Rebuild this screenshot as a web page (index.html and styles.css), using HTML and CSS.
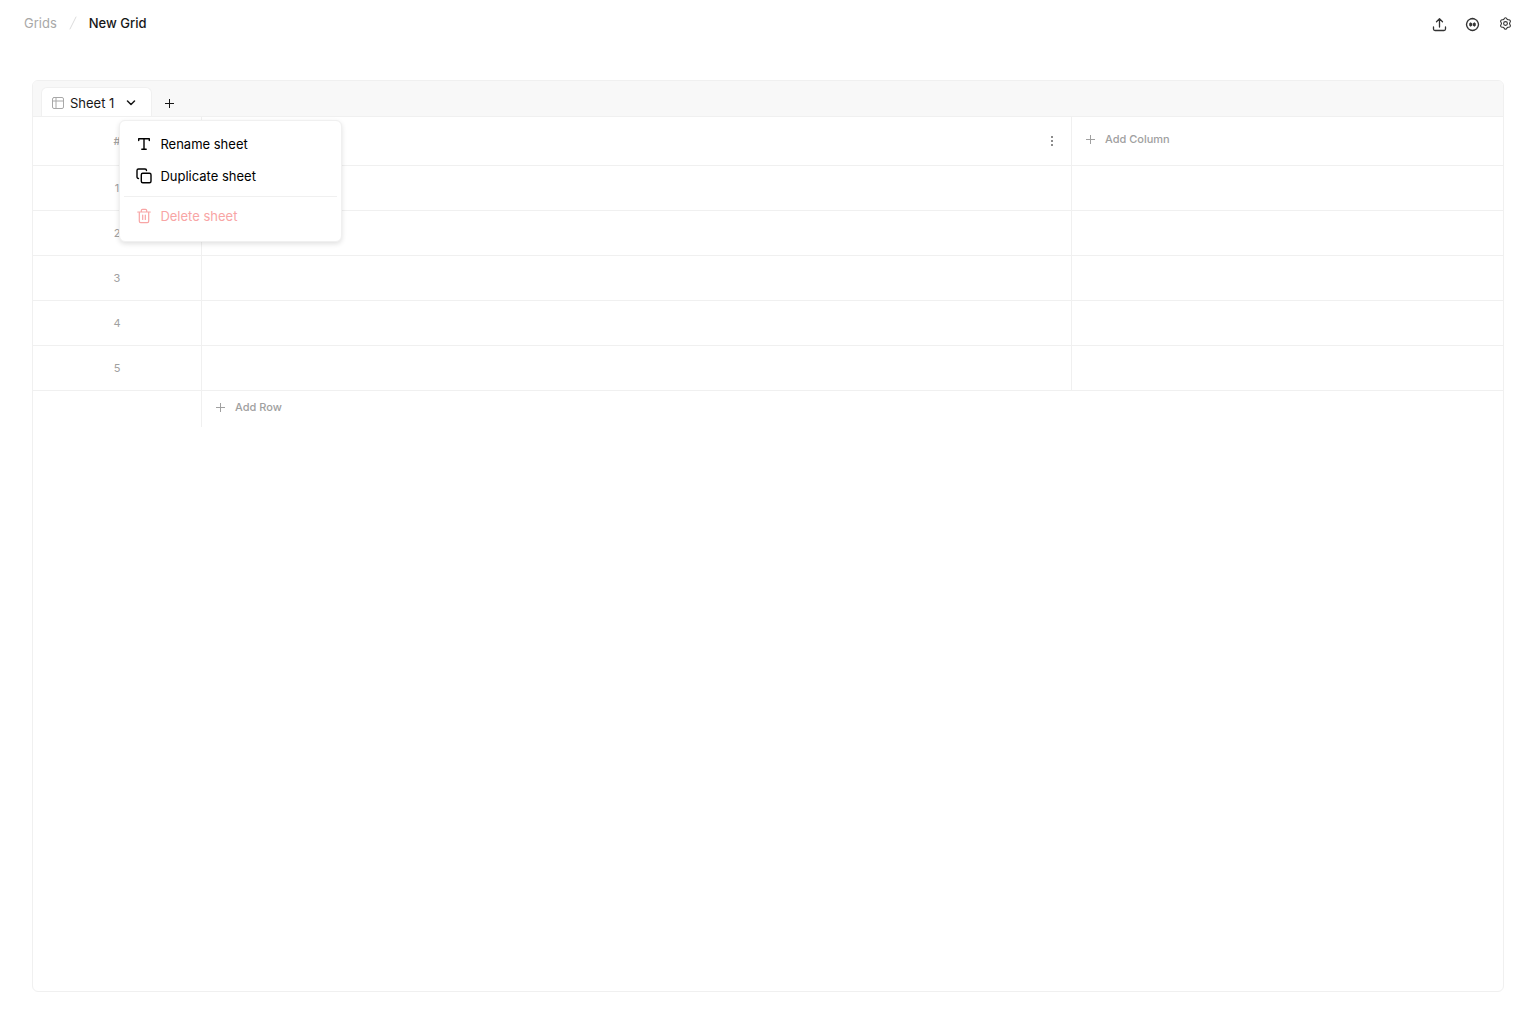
FILE: index.html
```html
<!DOCTYPE html>
<html lang="en">
<head>
  <meta charset="UTF-8">
  <meta name="viewport" content="width=device-width, initial-scale=1">
  <title>New Grid</title>
  <link rel="stylesheet" href="styles.css">
</head>
<body>

<header class="topbar">
  <nav class="breadcrumb" aria-label="Breadcrumb">
    <a href="#">Grids</a>
    <svg class="slash" width="8" height="14" viewBox="0 0 8 14"><path d="M7 1 1 13"/></svg>
    <span class="current">New Grid</span>
  </nav>
  <div class="actions">
    <button class="icon-btn" aria-label="Share">
      <svg width="15" height="15" viewBox="0 0 15 15"><path d="M7.500 10V2M4.500 4.800l3-3 3 3M1.500 10v2a1.500 1.500 0 0 0 1.500 1.500h9a1.500 1.500 0 0 0 1.500-1.500v-2"/></svg>
    </button>
    <button class="icon-btn" aria-label="Assistant">
      <svg width="15" height="15" viewBox="0 0 15 15"><path d="M7.500 1.500 9.600 2 11.600 3.200 13 5.300 13.500 7.500 13 9.700 11.700 11.700 9.700 13 7.500 13.500 5.300 13 3.300 11.700 2 9.700 1.500 7.500 2 5.300 3.300 3.200 5.300 2Z"/><path class="fill" d="M5.500 5.200 7.200 6.500V8.500L5.500 9.800 4.200 8.500V6.500ZM9.500 5.200 10.800 6.500V8.500L9.500 9.800 7.800 8.500V6.500Z"/></svg>
    </button>
    <button class="icon-btn" aria-label="Settings">
      <svg class="gear" width="13" height="13" viewBox="0 0 24 24"><path d="M12 1.500c1.500 0 2.200.8 2.700 2.200.4 1.100 1.300 1.600 2.500 1.400 1.600-.3 2.700 0 3.500 1.300.8 1.400.5 2.400-.5 3.600-.8 1-.8 3 0 4 1 1.200 1.300 2.200.5 3.600-.8 1.300-1.900 1.600-3.500 1.300-1.200-.2-2.100.3-2.500 1.400-.5 1.400-1.200 2.200-2.700 2.200s-2.200-.8-2.700-2.200c-.4-1.100-1.300-1.600-2.500-1.400-1.600.3-2.700 0-3.500-1.300-.8-1.400-.5-2.400.5-3.600.8-1 .8-3 0-4-1-1.200-1.300-2.200-.5-3.600.8-1.300 1.900-1.600 3.500-1.300 1.200.2 2.100-.3 2.500-1.400.5-1.400 1.200-2.200 2.700-2.200Z"/><circle cx="12" cy="12" r="3.500"/></svg>
    </button>
  </div>
</header>

<main class="panel">
  <div class="tabs">
    <div class="tab">
      <svg class="tab-icon" width="12" height="12" viewBox="0 0 12 12"><rect x=".5" y=".5" width="11" height="11" rx="1.500"/><path d="M.5 4h11M4 .5v11"/></svg>
      <button class="tab-name">Sheet 1</button>
      <div class="dropdown">
        <button class="tab-toggle" aria-label="Sheet options" aria-expanded="true">
          <svg width="10" height="6" viewBox="0 0 10 6"><path d="m1.500 1 3.500 3.500L8.500 1"/></svg>
        </button>
        <div class="menu">
          <button class="menu-item">
            <svg width="16" height="16" viewBox="0 0 16 16"><path d="M2.700 4.500V2.700h10.600v1.800M8 2.700v10.600M5.800 13.300h4.400"/></svg>
            Rename sheet
          </button>
          <button class="menu-item">
            <svg width="16" height="16" viewBox="0 0 16 16"><rect x="5.300" y="5.300" width="9.700" height="9.400" rx="1.500"/><path d="M2.500 10.500A1.500 1.500 0 0 1 1 9V2.500A1.500 1.500 0 0 1 2.500 1H9a1.500 1.500 0 0 1 1.500 1.500"/></svg>
            Duplicate sheet
          </button>
          <hr>
          <button class="menu-item danger" disabled>
            <svg width="16" height="16" viewBox="0 0 16 16"><path d="M1.700 4h12.600M3.300 4v9.300c0 .8.500 1.400 1.400 1.400h6.600c.9 0 1.400-.6 1.400-1.400V4M5.300 4V2.500c0-.8.500-1.200 1.200-1.200h3c.7 0 1.200.4 1.200 1.200V4M6.700 7v4.500M9.300 7v4.500"/></svg>
            Delete sheet
          </button>
        </div>
      </div>
    </div>
    <button class="add-tab" aria-label="Add sheet">
      <svg width="9" height="9" viewBox="0 0 9 9"><path d="M4.500 0v9M0 4.500h9"/></svg>
    </button>
  </div>

  <table class="grid">
    <thead>
      <tr>
        <th class="num">#</th>
        <th class="data">
          <button class="more" aria-label="Column options">
            <svg width="2" height="10" viewBox="0 0 2 10"><path d="M0 0h2v2H0zM0 4h2v2H0zM0 8h2v2H0z"/></svg>
          </button>
        </th>
        <th class="extra">
          <button class="add">
            <svg width="9" height="9" viewBox="0 0 9 9"><path d="M4.500 0v9M0 4.500h9"/></svg>
            Add Column
          </button>
        </th>
      </tr>
    </thead>
    <tbody>
      <tr><td>1</td><td></td><td></td></tr>
      <tr><td>2</td><td></td><td></td></tr>
      <tr><td>3</td><td></td><td></td></tr>
      <tr><td>4</td><td></td><td></td></tr>
      <tr><td>5</td><td></td><td></td></tr>
    </tbody>
    <tfoot>
      <tr>
        <td></td>
        <td colspan="2">
          <button class="add">
            <svg width="9" height="9" viewBox="0 0 9 9"><path d="M4.500 0v9M0 4.500h9"/></svg>
            Add Row
          </button>
        </td>
      </tr>
    </tfoot>
  </table>
</main>

</body>
</html>
```
FILE: styles.css
```css
* {
  box-sizing: border-box;
}
body {
  margin: 0;
  min-height: 100vh;
  display: flex;
  flex-direction: column;
  background: #fff;
  color: #171717;
  font-family: Inter, "Liberation Sans", sans-serif;
  font-size: 13px;
  line-height: 20px;
}
button {
  padding: 0;
  border: none;
  background: none;
  color: inherit;
  font: inherit;
  cursor: pointer;
}
svg {
  display: block;
  flex: none;
  fill: none;
  stroke: currentColor;
  stroke-linecap: round;
  stroke-linejoin: round;
}

/* top bar */
.topbar {
  display: flex;
  justify-content: space-between;
  align-items: center;
  height: 48px;
  padding: 0 19px 0 24px;
}
.breadcrumb {
  display: flex;
  align-items: center;
  gap: 12px;
  padding-bottom: 2px;
  font-weight: 500;
}
.breadcrumb a {
  color: #a8a8a8;
  font-weight: 400;
  text-decoration: none;
}
.slash {
  color: #dcdcdc;
}
.actions {
  display: flex;
  gap: 9px;
}
.icon-btn {
  display: flex;
  align-items: center;
  justify-content: center;
  width: 24px;
  height: 24px;
  color: #333;
}
.icon-btn svg {
  stroke-width: 1.3px;
}
.icon-btn .gear {
  margin-bottom: 2px;
  stroke-width: 2px;
}
.icon-btn .fill {
  fill: currentColor;
  stroke: none;
}

/* sheet panel */
.panel {
  flex: 1;
  margin: 32px;
  border: 1px solid #f0f0f0;
  border-radius: 6px;
}
.tabs {
  display: flex;
  align-items: flex-end;
  height: 36px;
  padding-left: 8px;
  border-bottom: 1px solid #f0f0f0;
  border-radius: 5px 5px 0 0;
  background: #f8f8f8;
}
.tab {
  display: flex;
  align-items: center;
  height: 29px;
  padding: 2px 8px 0 10px;
  border: 1px solid #f0f0f0;
  border-bottom: none;
  border-radius: 6px 6px 0 0;
  background: #fff;
}
.tab-icon {
  margin-right: 6px;
  color: #a8a8a8;
}
.dropdown {
  position: relative;
  margin-left: 5px;
}
.tab-toggle {
  display: flex;
  align-items: center;
  justify-content: center;
  width: 24px;
  height: 20px;
}
.tab-toggle svg {
  stroke-width: 1.5px;
}
.add-tab {
  display: flex;
  align-items: center;
  justify-content: center;
  width: 24px;
  height: 26px;
  margin-left: 5px;
}

/* sheet menu */
.menu {
  position: absolute;
  top: 27px;
  left: 0;
  z-index: 1;
  width: 223px;
  padding: 7px 4px 9px;
  border: 1px solid #f0f0f0;
  border-radius: 6px;
  background: #fff;
  box-shadow: 0 2px 5px rgba(0, 0, 0, 0.12);
}
.menu-item {
  display: flex;
  align-items: center;
  gap: 8px;
  width: 100%;
  height: 32px;
  padding: 0 12px;
  color: #000;
}
.menu-item svg {
  stroke-width: 1.4px;
}
.menu-item.danger {
  color: #f8a5a5;
  cursor: default;
}
.menu-item.danger svg {
  stroke-width: 1.2px;
}
.menu hr {
  height: 1px;
  margin: 4px 0 3px;
  border: none;
  background: #f0f0f0;
}

/* grid */
.grid {
  width: 100%;
  table-layout: fixed;
  border-spacing: 0;
  color: #a0a0a0;
  font-size: 11px;
}
.grid th,
.grid td {
  height: 45px;
  padding: 0;
  border-right: 1px solid #f0f0f0;
  border-bottom: 1px solid #f0f0f0;
  text-align: center;
}
.grid th {
  height: 49px;
  font-weight: 500;
}
.grid th:last-child,
.grid td:last-child {
  border-right: none;
}
.grid .num {
  width: 169px;
}
.grid .extra {
  width: 431px;
}
.grid tfoot td {
  height: 36px;
  border-bottom: none;
}
.more {
  display: flex;
  align-items: center;
  justify-content: center;
  width: 24px;
  height: 24px;
  margin: 0 7px 0 auto;
  color: #8c8c8c;
}
.more svg {
  fill: currentColor;
  stroke: none;
}
.add {
  display: flex;
  align-items: center;
  gap: 10px;
  margin-left: 14px;
  padding-bottom: 4px;
  font-weight: 500;
}
.add svg {
  stroke-linecap: butt;
}
```
